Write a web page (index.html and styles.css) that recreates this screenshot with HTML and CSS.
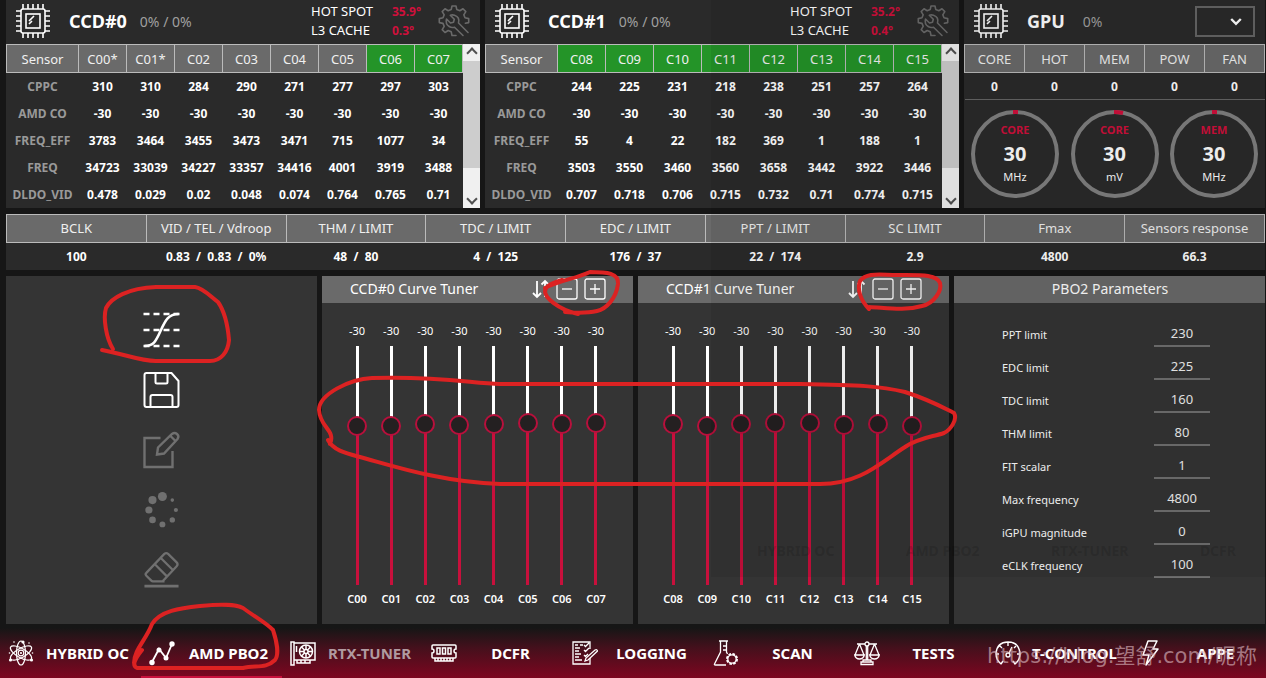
FILE: index.html
```
<!DOCTYPE html>
<html lang="en">
<head>
  <meta charset="utf-8">
  <title>AMD PBO2</title>
  <link rel="stylesheet" href="styles.css">
</head>
<body>
  <svg class="symbols" aria-hidden="true">
    <symbol id="chip" viewBox="0 0 36 36">
      <g fill="none" stroke="currentColor" stroke-width="1.6">
        <rect x="6" y="6" width="24" height="24" rx="2"/>
        <rect x="11" y="11" width="14" height="14"/>
        <path d="M14 18l5-5M14 21l3-3M8 6V1M13 6V1M18 6V1M23 6V1M28 6V1M8 30v5M13 30v5M18 30v5M23 30v5M28 30v5M6 8H1M6 13H1M6 18H1M6 23H1M6 28H1M30 8h5M30 13h5M30 18h5M30 23h5M30 28h5"/>
      </g>
    </symbol>
    <symbol id="wrench" viewBox="0 0 32 32">
      <g fill="none" stroke="currentColor" stroke-width="1.6" stroke-linejoin="round" stroke-linecap="round">
        <path d="M18 30.500h-4l-.8-3.800-3-1.200-3.200 2-2.800-2.900 2-3.200-1.200-3-3.700-.8v-4l3.700-.8 1.200-3-2-3.200L7 3.800l3.200 2 3-1.200.8-3.600h4l.8 3.600 3 1.200 3.200-2 2.800 2.800-2 3.200 1.200 3 3.700.8v4l-3.300.7"/>
        <path d="M30 27.500L20.500 18c1-3.500-.5-6.500-4-7.800-1.500-.5-3-.4-4.200 0l4 4-.8 3-3 .8-4-4c-.8 3 .2 6 2.700 7.500 1.600 1 3.500 1.200 5.300.7l8.500 8.300"/>
      </g>
    </symbol>
    <symbol id="swap" viewBox="0 0 18 20">
      <path d="M5 2v16M1 14l4 4 4-4M13 18V2M9.500 5.500L13 2l3.500 3.500" fill="none" stroke="currentColor" stroke-width="1.800"/>
    </symbol>
    <symbol id="minus" viewBox="0 0 22 22">
      <g fill="none" stroke="currentColor" stroke-width="1.300"><rect x="1" y="1" width="20" height="20" rx="2"/><path d="M6 11h10"/></g>
    </symbol>
    <symbol id="plus" viewBox="0 0 22 22">
      <g fill="none" stroke="currentColor" stroke-width="1.300"><rect x="1" y="1" width="20" height="20" rx="2"/><path d="M6 11h10M11 6v10"/></g>
    </symbol>
  </svg>

  <div class="dashboard">
    <div class="row monitors">
      <section class="panel">
        <header class="monitor-head">
          <svg class="chip"><use href="#chip"/></svg>
          <h2>CCD#0</h2>
          <span class="load">0% / 0%</span>
          <dl class="temps">
            <dt>HOT SPOT</dt><dd>35.9°</dd>
            <dt>L3 CACHE</dt><dd>0.3°</dd>
          </dl>
          <button class="icon-button tool" aria-label="CCD#0 settings"><svg><use href="#wrench"/></svg></button>
        </header>
        <div class="scroller">
          <table class="cores" id="ccd0"></table>
          <div class="scrollbar"><span class="arrow up"></span><span class="grip"></span><span class="arrow down"></span></div>
        </div>
      </section>

      <section class="panel">
        <header class="monitor-head">
          <svg class="chip"><use href="#chip"/></svg>
          <h2>CCD#1</h2>
          <span class="load">0% / 0%</span>
          <dl class="temps">
            <dt>HOT SPOT</dt><dd>35.2°</dd>
            <dt>L3 CACHE</dt><dd>0.4°</dd>
          </dl>
          <button class="icon-button tool" aria-label="CCD#1 settings"><svg><use href="#wrench"/></svg></button>
        </header>
        <div class="scroller">
          <table class="cores" id="ccd1"></table>
          <div class="scrollbar"><span class="arrow up"></span><span class="grip"></span><span class="arrow down"></span></div>
        </div>
      </section>

      <section class="panel">
        <header class="monitor-head">
          <svg class="chip"><use href="#chip"/></svg>
          <h2>GPU</h2>
          <span class="load wide">0%</span>
          <div class="gpu-select">
            <select aria-label="GPU"><option></option></select>
            <svg viewBox="0 0 10 8"><path d="M1 1.500l4 4 4-4" fill="none" stroke="currentColor" stroke-width="2"/></svg>
          </div>
        </header>
        <table class="gpu-table">
          <tr><th>CORE</th><th>HOT</th><th>MEM</th><th>POW</th><th>FAN</th></tr>
          <tr><td>0</td><td>0</td><td>0</td><td>0</td><td>0</td></tr>
        </table>
        <div class="dials">
          <div class="dial">
            <svg viewBox="0 0 88 88"><circle cx="44" cy="44" r="42"/><path d="M42 2h5"/></svg>
            <span class="dial-name">CORE</span><b>30</b><span>MHz</span>
          </div>
          <div class="dial">
            <svg viewBox="0 0 88 88"><circle cx="44" cy="44" r="42"/><path d="M43 2q5 0 9 1"/></svg>
            <span class="dial-name">CORE</span><b>30</b><span>mV</span>
          </div>
          <div class="dial">
            <svg viewBox="0 0 88 88"><circle cx="44" cy="44" r="42"/><path d="M42 2h5"/></svg>
            <span class="dial-name">MEM</span><b>30</b><span>MHz</span>
          </div>
        </div>
      </section>
    </div>

    <table class="limits panel">
      <tr><th>BCLK</th><th>VID / TEL / Vdroop</th><th>THM / LIMIT</th><th>TDC / LIMIT</th><th>EDC / LIMIT</th><th>PPT / LIMIT</th><th>SC LIMIT</th><th>Fmax</th><th>Sensors response</th></tr>
      <tr><td>100</td><td>0.83 &nbsp;/&nbsp; 0.83 &nbsp;/&nbsp; 0%</td><td>48 &nbsp;/&nbsp; 80</td><td>4 &nbsp;/&nbsp; 125</td><td>176 &nbsp;/&nbsp; 37</td><td>22 &nbsp;/&nbsp; 174</td><td>2.9</td><td>4800</td><td>66.3</td></tr>
    </table>

    <div class="row tuning">
      <section class="block toolbar">
        <button class="icon-button" aria-label="Curve">
          <svg viewBox="0 0 36 36" fill="none" stroke="currentColor" stroke-width="2.600">
            <path d="M0 2h36M0 18h36M0 34h36" stroke-dasharray="6 4"/>
            <path d="M1 34c9 0 11-4 16-15S25 2 35 2"/>
          </svg>
        </button>
        <button class="icon-button" aria-label="Save">
          <svg viewBox="0 0 36 36" fill="none" stroke="currentColor" stroke-width="2">
            <path d="M3 1h25l7 8v24q0 2-2 2H3q-2 0-2-2V3q0-2 2-2z"/>
            <path d="M12 1v9q0 1.500 1.500 1.500h9q1.500 0 1.500-1.500V1M7 35V25q0-2 2-2h18q2 0 2 2v10"/>
          </svg>
        </button>
        <button class="icon-button muted" aria-label="Edit">
          <svg viewBox="0 0 36 36" fill="none" stroke="currentColor" stroke-width="2.400">
            <path d="M17 6H1v29h28V19"/>
            <path d="M13.500 22.500l1-7L28.500 2q2.500-2 5 0t.5 5L20.500 21.500zM27 4l5 5"/>
          </svg>
        </button>
        <button class="icon-button muted" aria-label="Reload">
          <svg viewBox="0 0 36 40" fill="currentColor">
            <circle cx="19" cy="5" r="5"/><circle cx="8" cy="9" r="4.500"/><circle cx="4" cy="20" r="4"/><circle cx="8" cy="31" r="3.700"/>
            <circle cx="19" cy="36" r="3.300"/><circle cx="30" cy="31" r="3"/><circle cx="34" cy="20" r="2.300"/><circle cx="30" cy="9" r="2"/>
          </svg>
        </button>
        <button class="icon-button muted" aria-label="Clear">
          <svg viewBox="0 0 36 38" fill="none" stroke="currentColor" stroke-width="2.400">
            <path d="M20 31H9q-1 0-2-1l-5-5q-1.500-1.500 0-3L21 2q2-1.500 4 0l9 9q2 2 0 4L20 30zM17 6l13 13M11 13l13 13"/>
            <path d="M0 36h36" stroke-width="3"/>
          </svg>
        </button>
      </section>

      <section class="block">
        <header class="block-head">
          <h3>CCD#0 Curve Tuner</h3>
          <button class="icon-button swap" aria-label="Swap"><svg><use href="#swap"/></svg></button>
          <button class="icon-button step" aria-label="Decrease all"><svg><use href="#minus"/></svg></button>
          <button class="icon-button step" aria-label="Increase all"><svg><use href="#plus"/></svg></button>
        </header>
        <div class="sliders" id="tuner0"></div>
      </section>

      <section class="block">
        <header class="block-head">
          <h3>CCD#1 Curve Tuner</h3>
          <button class="icon-button swap" aria-label="Swap"><svg><use href="#swap"/></svg></button>
          <button class="icon-button step" aria-label="Decrease all"><svg><use href="#minus"/></svg></button>
          <button class="icon-button step" aria-label="Increase all"><svg><use href="#plus"/></svg></button>
        </header>
        <div class="sliders" id="tuner1"></div>
      </section>

      <section class="block">
        <header class="block-head centered"><h3>PBO2 Parameters</h3></header>
        <form class="params">
          <label for="ppt">PPT limit</label><input id="ppt" type="text" value="230">
          <label for="edc">EDC limit</label><input id="edc" type="text" value="225">
          <label for="tdc">TDC limit</label><input id="tdc" type="text" value="160">
          <label for="thm">THM limit</label><input id="thm" type="text" value="80">
          <label for="fit">FIT scalar</label><input id="fit" type="text" value="1">
          <label for="fmax">Max frequency</label><input id="fmax" type="text" value="4800">
          <label for="igpu">iGPU magnitude</label><input id="igpu" type="text" value="0">
          <label for="eclk">eCLK frequency</label><input id="eclk" type="text" value="100">
        </form>
      </section>
    </div>
  </div>

  <nav class="tabs">
    <a href="#">
      <svg viewBox="0 0 26 26" fill="none" stroke="currentColor" stroke-width="1.200">
        <ellipse cx="13" cy="13" rx="4.500" ry="12"/>
        <ellipse cx="13" cy="13" rx="4.500" ry="12" transform="rotate(60 13 13)"/>
        <ellipse cx="13" cy="13" rx="4.500" ry="12" transform="rotate(-60 13 13)"/>
        <circle cx="13" cy="13" r="2.800"/><circle cx="13" cy="13" r=".5"/>
        <g fill="currentColor" stroke="none"><circle cx="15" cy="2" r="1.600"/><circle cx="2.500" cy="20" r="1.600"/><circle cx="23.500" cy="20" r="1.600"/><circle cx="6" cy="2" r=".8"/><circle cx="21" cy="3" r=".8"/><circle cx="1.500" cy="13" r=".8"/><circle cx="24.500" cy="13" r=".8"/></g>
      </svg>
      <span>HYBRID OC</span>
    </a>
    <a href="#" class="active">
      <svg viewBox="0 0 26 26" fill="currentColor" stroke="currentColor" stroke-width="1.800">
        <path d="M3 22l7-13 7 9 6-14" fill="none"/>
        <g stroke="none"><circle cx="3" cy="22.500" r="2.700"/><circle cx="10" cy="10" r="2.500"/><circle cx="17" cy="18" r="2.500"/><circle cx="23" cy="4" r="2.700"/></g>
      </svg>
      <span>AMD PBO2</span>
    </a>
    <a href="#" class="disabled">
      <svg viewBox="0 0 26 26" fill="none" stroke="currentColor" stroke-width="1.500">
        <path d="M1 2h3v23H1zM4 3h21v17H4M7 20v3h13v-3M11 20v3M15 20v3M6.500 6v6"/>
        <circle cx="16" cy="11.500" r="6.500"/><circle cx="16" cy="11.500" r="2"/>
        <path d="M16 5v4.500M16 13.500V18M9.500 11.500H14M18 11.500h4.500M11.500 7l3 3M17.500 13l3 3M20.500 7l-3 3M14.500 13l-3 3"/>
      </svg>
      <span>RTX-TUNER</span>
    </a>
    <a href="#">
      <svg viewBox="0 0 26 26" fill="none" stroke="currentColor" stroke-width="1.500">
        <path d="M2 5h22q1 0 1 1v3q-2 0-2 2t2 2v4q0 1-1 1H2q-1 0-1-1v-4q2 0 2-2T1 9V6q0-1 1-1z"/>
        <path d="M6 8h3v6H6zM11.500 8h3v6h-3zM17 8h3v6h-3zM4 18v3h18v-3M7 18v3M10 18v3M13 18v3M16 18v3M19 18v3"/>
      </svg>
      <span>DCFR</span>
    </a>
    <a href="#">
      <svg viewBox="0 0 26 26" fill="none" stroke="currentColor" stroke-width="1.300">
        <path d="M18 9V2H1v22h17v-6M3 5h3M3 8h5M3 11h4M3 14h6M3 17h4M3 20h7M8 5h3M12 5l1.500 1.500L17 3M12 10l1.500 1.500L17 8M12 15l1.500 1.500L16 14"/>
        <path d="M13 21l1-3 9-8q2-1 2.500 1L16 20z"/>
      </svg>
      <span>LOGGING</span>
    </a>
    <a href="#">
      <svg viewBox="0 0 26 26" fill="none" stroke="currentColor" stroke-width="1.300">
        <path d="M6 1h9M7.500 1v11L1.500 24q-.5 1 1 1H13M13.500 1v11l1 2M10 6h3M10 10h3"/>
        <circle cx="19" cy="19" r="5" stroke-width="2" stroke-dasharray="2.500 1.400"/><circle cx="19" cy="19" r="4.200"/>
      </svg>
      <span>SCAN</span>
    </a>
    <a href="#">
      <svg viewBox="0 0 26 26" fill="none" stroke="currentColor" stroke-width="1.300">
        <circle cx="13" cy="4" r="2"/>
        <path d="M11 4H3M15 4h8M12.300 6v14M13.700 6v14M9 20h8v2H9zM7 22h12v2.500H7zM5.500 4L1 15M5.500 4L10 15M20.500 4L16 15M20.500 4L25 15M.7 15h9.600q-1 4-4.800 4T.7 15zM15.700 15h9.600q-1 4-4.800 4t-4.800-4z"/>
      </svg>
      <span>TESTS</span>
    </a>
    <a href="#">
      <svg viewBox="0 0 26 26" fill="none" stroke="currentColor" stroke-width="1.400">
        <path d="M6 24q-5-4-5-10.500Q2 2 13 2t12 11.500Q25 20 20 24l-2-3M6 24l2-3M13 2v4M5 6l2 2M21 6l-2 2M1 14h3M22 14h3"/>
        <circle cx="13" cy="15" r="2"/><path d="M14 13l3-6"/>
      </svg>
      <span>T-CONTROL</span>
    </a>
    <a href="#">
      <svg viewBox="0 0 26 26" fill="none" stroke="currentColor" stroke-width="1.500" stroke-linejoin="round">
        <path d="M12 1h9l-4 8h5L10 25l3-10H7z"/>
      </svg>
      <span>APPE</span>
    </a>
  </nav>

  <!-- second window showing through -->
  <div class="ghost" aria-hidden="true">
    <span>HYBRID OC</span><span>AMD PBO2</span><span>RTX-TUNER</span><span>DCFR</span>
  </div>

  <p class="watermark">https://blog.望舒.com/昵称</p>

  <!-- hand drawn marker -->
  <svg class="marker" viewBox="0 0 1266 678" preserveAspectRatio="none">
    <path d="M113 349C106 338 103 318 106 308C111 298 128 288 156 287H195C203 288 210 296 218 302C225 312 228 328 229 340C228 352 221 361 210 361H156C140 361 124 354 102 350"/>
    <path d="M545 288C560 280 575 279 590 272C607 272 619 273 618 284C616 299 606 309 597 311C588 313 577 313 565 312M578 314C560 310 541 297 546 288C550 283 556 282 562 280"/>
    <path d="M869 309C860 300 857 288 860 281C867 272 880 275 897 275C920 275 937 274 940 283C942 290 935 303 922 306C905 311 888 308 869 307"/>
    <path d="M330 444C336 430 320 428 319 410C319 394 350 379 372 378C440 376 470 383 500 384H800C860 385 880 386 905 392C930 400 940 406 954 413C958 420 950 430 944 433C932 437 918 438 905 447C880 463 860 484 820 484H500C440 482 390 465 360 457C345 453 333 450 328 440"/>
    <path d="M134 663C134 650 146 640 152 624C160 611 180 608 200 606C222 604 235 604 243 608C255 617 265 622 273 630C277 642 279 655 275 660C266 669 256 665 243 668H137C132 666 134 660 142 650"/>
  </svg>

  <script src="script.js"></script>
</body>
</html>
```
FILE: script.js
```
const sensors = ['CPPC', 'AMD CO', 'FREQ_EFF', 'FREQ', 'DLDO_VID'];

const ccds = [
  {
    names: ['C00*', 'C01*', 'C02', 'C03', 'C04', 'C05', 'C06', 'C07'],
    green: ['C06', 'C07'],
    rows: [
      [310, 310, 284, 290, 271, 277, 297, 303],
      [-30, -30, -30, -30, -30, -30, -30, -30],
      [3783, 3464, 3455, 3473, 3471, 715, 1077, 34],
      [34723, 33039, 34227, 33357, 34416, 4001, 3919, 3488],
      [0.478, 0.029, 0.02, 0.048, 0.074, 0.764, 0.765, 0.71]
    ],
    levels: [149, 149, 151, 150, 151, 152, 151, 152]
  },
  {
    names: ['C08', 'C09', 'C10', 'C11', 'C12', 'C13', 'C14', 'C15'],
    green: ['C08', 'C09', 'C10', 'C11', 'C12', 'C13', 'C14', 'C15'],
    rows: [
      [244, 225, 231, 218, 238, 251, 257, 264],
      [-30, -30, -30, -30, -30, -30, -30, -30],
      [55, 4, 22, 182, 369, 1, 188, 1],
      [3503, 3550, 3460, 3560, 3658, 3442, 3922, 3446],
      [0.707, 0.718, 0.706, 0.715, 0.732, 0.71, 0.774, 0.715]
    ],
    levels: [151, 149, 151, 152, 152, 150, 151, 149]
  }
];

ccds.forEach((ccd, n) => {
  const heads = ccd.names.map(name => `<th class="${ccd.green.includes(name) ? 'green' : ''}">${name}</th>`).join('');
  const rows = ccd.rows.map((row, i) =>
    `<tr><td class="sensor">${sensors[i]}</td>${row.map(v => `<td>${v}</td>`).join('')}</tr>`).join('');
  document.getElementById('ccd' + n).innerHTML = `<tr><th class="sensor">Sensor</th>${heads}</tr>${rows}`;

  document.getElementById('tuner' + n).innerHTML = ccd.names.map((name, i) => {
    const core = name.replace('*', '');
    const level = ccd.levels[i];
    return `<div class="slider">
      <output>-30</output>
      <input type="range" id="${core}" min="0" max="219" value="${level}" style="--level: ${level / 219 * 100}%">
      <label for="${core}">${core}</label>
    </div>`;
  }).join('');
});

document.querySelectorAll('.slider input').forEach(input => {
  input.addEventListener('input', () => {
    input.style.setProperty('--level', input.value / 219 * 100 + '%');
  });
});
```
FILE: styles.css
```
* {
  box-sizing: border-box;
}

body {
  margin: 0;
  min-height: 100vh;
  display: flex;
  flex-direction: column;
  position: relative;
  overflow: hidden;
  background: #161616;
  color: #fff;
  font-family: "Noto Sans", "Open Sans", "Noto Sans CJK SC", sans-serif;
  font-size: 12px;
}

h2, h3, p, dl, dd {
  margin: 0;
}

.symbols {
  position: absolute;
  width: 0;
  height: 0;
}

.dashboard {
  flex: 1;
  display: flex;
  flex-direction: column;
  gap: 6px;
  padding: 0 1px 4px 6px;
}

.row {
  display: grid;
  gap: 5px;
}

.monitors {
  grid-template-columns: 474fr 474fr 301fr;
}

.tuning {
  flex: 1;
  grid-template-columns: repeat(4, 1fr);
}

.panel {
  background: #2a2a2a;
}

.block {
  background: #343434;
}

.icon-button {
  display: block;
  padding: 0;
  border: none;
  background: none;
  color: #fff;
  cursor: pointer;
}

.icon-button svg {
  display: block;
  width: 100%;
  height: 100%;
}

.icon-button.muted {
  color: #707070;
}

/* monitor headers */
.monitor-head {
  display: flex;
  align-items: center;
  height: 44px;
  padding: 0 10px 2px 9px;
}

.chip {
  width: 36px;
  height: 36px;
}

h2 {
  margin-left: 18px;
  font-size: 18px;
  line-height: 24px;
}

.load {
  margin-left: 13px;
  font-size: 14px;
  color: #a0a0a0;
}

.load.wide {
  margin-left: 18px;
}

.temps {
  display: grid;
  grid-template-columns: 81px 46px;
  margin-left: auto;
  line-height: 19px;
}

.temps dt {
  font-size: 13px;
}

.temps dd {
  font-weight: bold;
  color: #d0103c;
}

.tool {
  width: 32px;
  height: 32px;
  color: #6a6a6a;
}

.gpu-select {
  position: relative;
  margin-left: auto;
}

.gpu-select select {
  display: block;
  width: 60px;
  height: 31px;
  appearance: none;
  border: 2px solid #666;
  border-radius: 0;
  background: #2a2a2a;
  color: #fff;
}

.gpu-select svg {
  position: absolute;
  right: 13px;
  top: 11px;
  width: 12px;
  height: 10px;
  pointer-events: none;
}

/* tables */
table {
  width: 100%;
  table-layout: fixed;
  border-collapse: collapse;
}

th, td {
  height: 27px;
  padding: 0;
  text-align: center;
  white-space: nowrap;
}

th {
  height: 28px;
  border: 1px solid #bbb;
  background: #6a6a6a;
  color: #f0f0f0;
  font-size: 13px;
  font-weight: normal;
}

td {
  font-weight: bold;
}

th.green {
  background: #249428;
}

th.sensor {
  width: 72px;
}

td.sensor {
  color: #999;
}

.scroller {
  display: flex;
}

.scrollbar {
  flex: none;
  display: flex;
  flex-direction: column;
  width: 17px;
  background: #f0f0f0;
}

.scrollbar .grip {
  height: 107px;
  background: #cdcdcd;
}

.arrow {
  display: grid;
  place-items: center;
  height: 17px;
}

.arrow::before {
  content: "";
  width: 6px;
  height: 6px;
  border: solid #505050;
  border-width: 2px 0 0 2px;
  transform: rotate(45deg);
}

.arrow.down {
  margin-top: auto;
}

.arrow.down::before {
  transform: rotate(225deg);
}

.gpu-table {
  border-bottom: 1px solid #666;
}

.dials {
  display: flex;
  justify-content: space-between;
  padding: 10px 7px 9px;
}

.dial {
  position: relative;
  display: flex;
  flex-direction: column;
  align-items: center;
  width: 88px;
  height: 88px;
  padding-top: 11px;
  font-size: 11px;
  line-height: 18px;
}

.dial svg {
  position: absolute;
  inset: 0;
  fill: none;
  stroke: #808080;
  stroke-width: 4;
}

.dial path {
  stroke: #d0103c;
}

.dial-name {
  font-weight: bold;
  color: #d0103c;
}

.dial b {
  font-size: 20px;
  line-height: 29px;
}

.limits td {
  height: 28px;
}

/* tuning blocks */
.toolbar {
  display: flex;
  flex-direction: column;
  align-items: center;
  gap: 24px;
  padding-top: 36px;
}

.toolbar .icon-button {
  width: 37px;
  height: 36px;
}

.toolbar svg {
  overflow: visible;
}

.block-head {
  display: flex;
  align-items: center;
  gap: 6px;
  height: 27px;
  padding: 0 27px 2px 28px;
  background: #6a6a6a;
}

.block-head.centered {
  justify-content: center;
}

h3 {
  font-size: 14px;
  font-weight: normal;
  line-height: 20px;
}

.swap {
  width: 18px;
  height: 20px;
  margin-left: auto;
}

.step {
  width: 22px;
  height: 22px;
}

.sliders {
  display: grid;
  grid-template-columns: repeat(8, 1fr);
  padding: 20px 20px 0 18px;
}

.slider {
  display: flex;
  flex-direction: column;
  align-items: center;
  font-size: 11px;
  line-height: 16px;
}

.slider label {
  font-weight: 600;
}

.slider input {
  appearance: none;
  writing-mode: vertical-lr;
  direction: rtl;
  width: 20px;
  height: 239px;
  margin: 7px 0 6px;
  background: linear-gradient(to top, #c8103c var(--level), #fff 0) center / 3px 100% no-repeat;
}

.slider input::-webkit-slider-thumb {
  appearance: none;
  width: 20px;
  height: 20px;
  border: 2px solid #b8103c;
  border-radius: 50%;
  background: #242021;
}

.params {
  display: grid;
  grid-template-columns: 152px 56px;
  row-gap: 7px;
  align-items: center;
  padding: 18px 48px;
  font-size: 11px;
}

.params input {
  width: 100%;
  height: 26px;
  padding: 0;
  border: none;
  border-bottom: 2px solid #707070;
  background: none;
  color: #f0f0f0;
  font: inherit;
  font-size: 13px;
  text-align: center;
}

/* bottom tabs */
.tabs {
  display: flex;
  height: 50px;
  background: linear-gradient(#161616, #45101c 40%, #7d0620);
}

.tabs a {
  flex: none;
  display: flex;
  align-items: center;
  width: 141px;
  padding: 2px 0 0 8px;
  border-bottom: 2px solid transparent;
  color: #fff;
  font-size: 15px;
  font-weight: bold;
  text-decoration: none;
}

.tabs a.active {
  border-color: #c8103c;
}

.tabs a.disabled span {
  color: #b09aa0;
}

.tabs svg {
  flex: none;
  width: 26px;
  height: 26px;
}

.tabs span {
  flex: 1;
  text-align: center;
  white-space: nowrap;
}

.ghost {
  position: absolute;
  top: 0;
  left: 711px;
  right: 0;
  height: 577px;
  display: flex;
  align-items: flex-end;
  justify-content: space-between;
  padding: 0 30px 17px 46px;
  background: rgba(0, 0, 0, 0.07);
  color: rgba(0, 0, 0, 0.14);
  font-size: 14px;
  font-weight: bold;
  pointer-events: none;
}

.watermark {
  position: absolute;
  right: 9px;
  bottom: 8px;
  color: rgba(215, 180, 188, 0.65);
  font-family: "DejaVu Sans", "Noto Sans CJK SC", sans-serif;
  font-size: 21px;
  line-height: 28px;
  pointer-events: none;
}

.marker {
  position: absolute;
  inset: 0;
  width: 100%;
  height: 100%;
  fill: none;
  stroke: #dc2222;
  stroke-width: 4;
  stroke-linecap: round;
  stroke-linejoin: round;
  pointer-events: none;
}
```
